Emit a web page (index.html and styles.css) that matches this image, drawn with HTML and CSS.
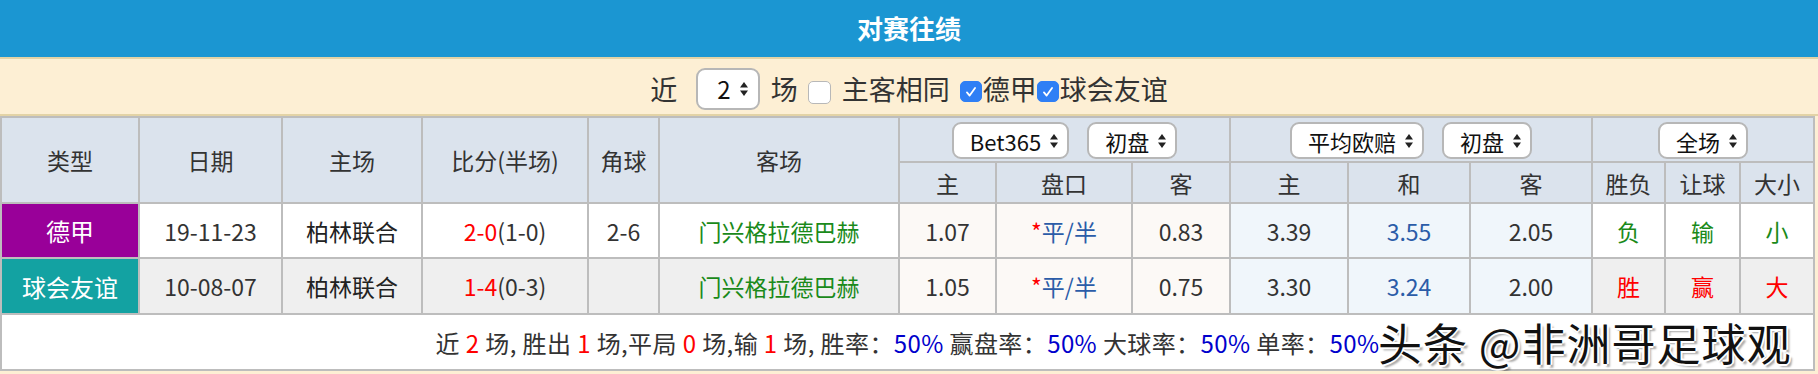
FILE: index.html
```html
<!DOCTYPE html>
<html lang="zh-CN">
<head>
  <meta charset="UTF-8">
  <title>对赛往绩</title>
  <link rel="stylesheet" href="styles.css">
</head>
<body>
  <div class="board">
    <div class="board-title">对赛往绩</div>
    <div class="filter-bar">
      <span class="lbl">近</span>
      <span class="sel sel-num">2<svg class="arr" viewBox="0 0 10 16"><polygon points="5,1 9,6.5 1,6.5"/><polygon points="1,9.5 9,9.5 5,15"/></svg></span>
      <span class="lbl">场</span>
      <span class="chk"></span>
      <span class="lbl">主客相同</span>
      <span class="chk on"><svg viewBox="0 0 20 20"><path d="M5.5 10.5 L8.5 14 L14.5 5.5"/></svg></span><span class="lbl tight">德甲</span>
      <span class="chk on"><svg viewBox="0 0 20 20"><path d="M5.5 10.5 L8.5 14 L14.5 5.5"/></svg></span><span class="lbl tight">球会友谊</span>
    </div>
    <table class="h2h">
      <colgroup>
        <col style="width:138px"><col style="width:143px"><col style="width:140px"><col style="width:166px"><col style="width:71px"><col style="width:240px">
        <col style="width:97px"><col style="width:136px"><col style="width:98px">
        <col style="width:118px"><col style="width:122px"><col style="width:122px">
        <col style="width:73px"><col style="width:75px"><col style="width:74px">
      </colgroup>
      <thead>
        <tr class="head-top">
          <th rowspan="2">类型</th>
          <th rowspan="2">日期</th>
          <th rowspan="2">主场</th>
          <th rowspan="2">比分(半场)</th>
          <th rowspan="2">角球</th>
          <th rowspan="2">客场</th>
          <th colspan="3"><span class="sel">Bet365<svg class="arr" viewBox="0 0 10 16"><polygon points="5,1 9,6.5 1,6.5"/><polygon points="1,9.5 9,9.5 5,15"/></svg></span><span class="sel">初盘<svg class="arr" viewBox="0 0 10 16"><polygon points="5,1 9,6.5 1,6.5"/><polygon points="1,9.5 9,9.5 5,15"/></svg></span></th>
          <th colspan="3"><span class="sel">平均欧赔<svg class="arr" viewBox="0 0 10 16"><polygon points="5,1 9,6.5 1,6.5"/><polygon points="1,9.5 9,9.5 5,15"/></svg></span><span class="sel">初盘<svg class="arr" viewBox="0 0 10 16"><polygon points="5,1 9,6.5 1,6.5"/><polygon points="1,9.5 9,9.5 5,15"/></svg></span></th>
          <th colspan="3"><span class="sel">全场<svg class="arr" viewBox="0 0 10 16"><polygon points="5,1 9,6.5 1,6.5"/><polygon points="1,9.5 9,9.5 5,15"/></svg></span></th>
        </tr>
        <tr class="head-sub">
          <th>主</th><th>盘口</th><th>客</th>
          <th>主</th><th>和</th><th>客</th>
          <th>胜负</th><th>让球</th><th>大小</th>
        </tr>
      </thead>
      <tbody>
        <tr class="row">
          <td class="league bundes">德甲</td>
          <td>19-11-23</td>
          <td class="home">柏林联合</td>
          <td><span class="red">2-0</span>(1-0)</td>
          <td>2-6</td>
          <td class="away">门兴格拉德巴赫</td>
          <td class="ah">1.07</td>
          <td class="ah line"><span class="red">*</span>平/半</td>
          <td class="ah">0.83</td>
          <td class="eu">3.39</td>
          <td class="eu draw">3.55</td>
          <td class="eu">2.05</td>
          <td class="lose">负</td>
          <td class="lose">输</td>
          <td class="lose">小</td>
        </tr>
        <tr class="row alt">
          <td class="league friendly">球会友谊</td>
          <td>10-08-07</td>
          <td class="home">柏林联合</td>
          <td><span class="red">1-4</span>(0-3)</td>
          <td></td>
          <td class="away">门兴格拉德巴赫</td>
          <td class="ah">1.05</td>
          <td class="ah line"><span class="red">*</span>平/半</td>
          <td class="ah">0.75</td>
          <td class="eu">3.30</td>
          <td class="eu draw">3.24</td>
          <td class="eu">2.00</td>
          <td class="win">胜</td>
          <td class="win">赢</td>
          <td class="win">大</td>
        </tr>
      </tbody>
      <tfoot>
        <tr>
          <td colspan="15" class="summary">近 <span class="red">2</span> 场, 胜出 <span class="red">1</span> 场,平局 <span class="red">0</span> 场,输 <span class="red">1</span> 场, 胜率：<span class="pct">50%</span> 赢盘率：<span class="pct">50%</span> 大球率：<span class="pct">50%</span> 单率：<span class="pct">50%</span></td>
        </tr>
      </tfoot>
    </table>
    <div class="watermark">头条 @非洲哥足球观</div>
  </div>
</body>
</html>
```

FILE: styles.css
```css
:root {
  --blue: #1b96d2;
  --beige: #fdefd4;
  --tan: #e3d3a6;
  --line: #bdbdbd;
  --head: #dbe3ed;
  --text: #333;
  --red: #f00;
  --green: #1a8a1a;
  --steel: #2b5ca8;
}
* { box-sizing: border-box; }
body {
  margin: 0;
  background: var(--beige);
  font-family: "Noto Sans CJK SC", "Noto Sans", sans-serif;
  color: var(--text);
}
.board {
  position: relative;
  width: 1818px;
}
.board-title {
  height: 59px;
  background: var(--blue);
  border-bottom: 2px solid var(--tan);
  color: #fff;
  font-size: 26px;
  font-weight: bold;
  display: flex;
  align-items: center;
  justify-content: center;
  padding-bottom: 2px;
}
.filter-bar {
  height: 57px;
  background: var(--beige);
  border-bottom: 2px solid var(--tan);
  display: flex;
  align-items: center;
  justify-content: center;
  font-size: 27px;
  padding-top: 4px;
}
.lbl { margin: 0 10px 0 0; line-height: 1; }
.lbl.tight { margin: 0; }
.filter-bar .sel-num {
  height: 42px;
  margin: 0 11px 0 9px;
  padding: 0 9px 0 19px;
  font-size: 24px;
  color: #111;
}
.sel {
  display: inline-flex;
  align-items: center;
  height: 37px;
  padding: 0 8px 0 16px;
  background: #fff;
  border: 2px solid #b7b7b7;
  border-radius: 9px;
  font-size: 22px;
  font-weight: normal;
  color: #111;
  margin: 0 9px;
  vertical-align: middle;
}
.arr {
  width: 10px;
  height: 16px;
  margin-left: 8px;
  fill: #222;
}
.chk {
  display: inline-flex;
  align-items: center;
  justify-content: center;
  width: 23px;
  height: 23px;
  border: 1px solid #b8b8b8;
  border-radius: 5px;
  background: #fff;
  margin: 8px 11px 0 0;
}
.chk.on {
  background: #2f7ff5;
  border-color: #2f7ff5;
  width: 22px;
  height: 21px;
  margin: 6px 1px 0 0;
}
.chk svg {
  width: 18px;
  height: 18px;
  fill: none;
  stroke: #fff;
  stroke-width: 2;
  stroke-linecap: round;
  stroke-linejoin: round;
}
.h2h {
  width: 1813px;
  table-layout: fixed;
  border-collapse: collapse;
  border: 2px solid var(--line);
  font-size: 23px;
}
.h2h th,
.h2h td {
  border: 2px solid var(--line);
  text-align: center;
  padding: 0;
  white-space: nowrap;
}
.h2h th {
  background: var(--head);
  font-weight: normal;
  color: var(--text);
}
.head-top th { height: 45px; }
.head-sub th { height: 41px; }
.row td {
  height: 55px;
  background: #fff;
}
.row.alt td {
  height: 56px;
  background: #efefef;
}
.row td.ah { background: #fcf9f6; }
.row td.eu { background: #f0f6fb; }
.row td.league {
  color: #fff;
  font-size: 24px;
}
.row td.bundes { background: #990099; }
.row td.friendly { background: #13a2a2; }
.home { color: #222; }
.away { color: var(--green); }
.line,
.draw { color: var(--steel); }
.red { color: var(--red); }
.lose { color: var(--green); }
.win { color: var(--red); }
.summary {
  height: 56px;
  background: #fff;
  font-size: 24px;
  letter-spacing: 0.4px;
}
.summary .pct { color: #0000cc; }
.watermark {
  position: absolute;
  left: 1378px;
  top: 310px;
  font-size: 44px;
  color: #111;
  letter-spacing: 1px;
  text-shadow: -2px 0 #fff, 2px 0 #fff, 0 -2px #fff, 0 2px #fff, 3px 3px 2px rgba(0,0,0,0.35);
}
```
